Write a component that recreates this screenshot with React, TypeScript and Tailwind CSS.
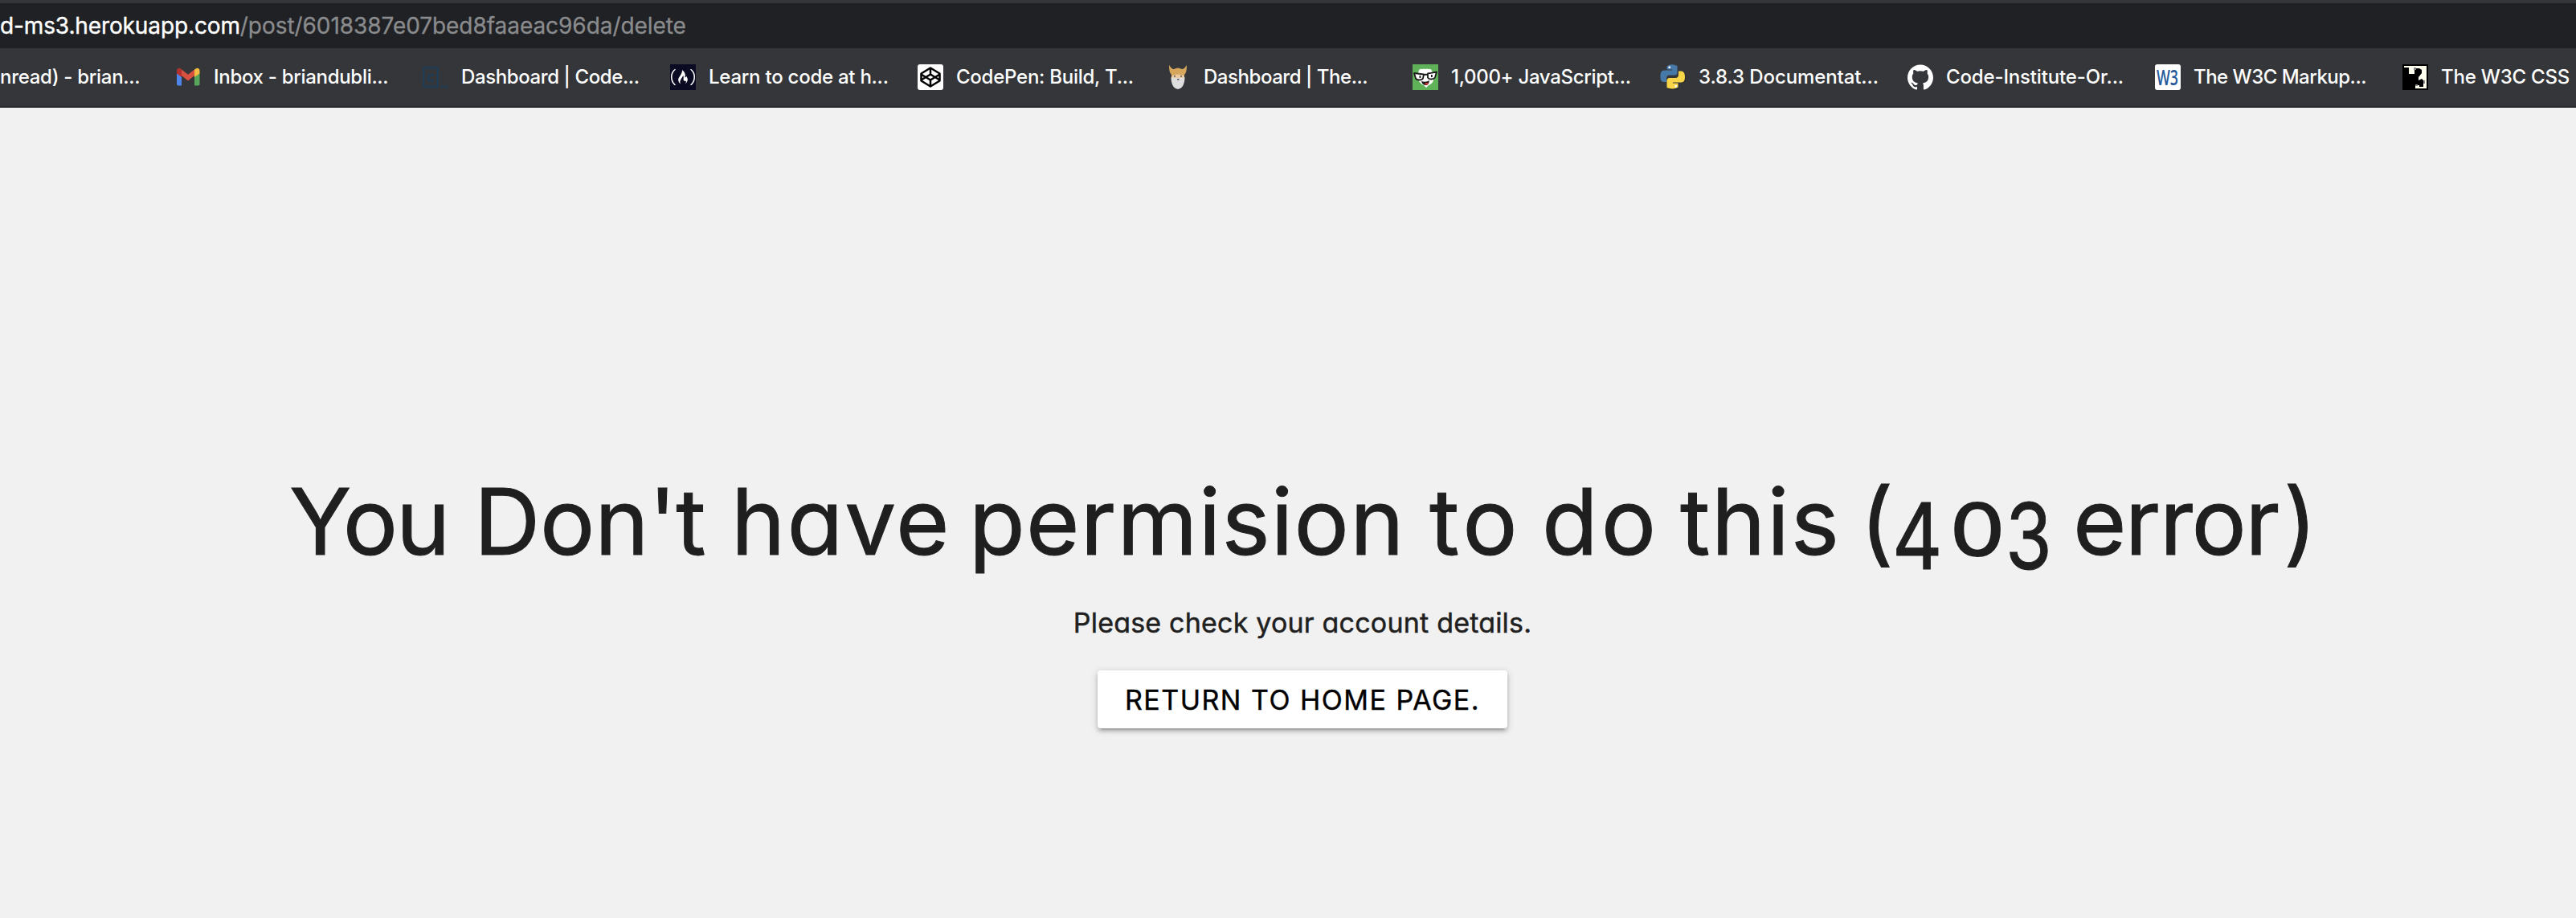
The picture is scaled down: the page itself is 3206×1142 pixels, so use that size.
import React from "react";
import { SiFreecodecamp, SiGithub } from "react-icons/si";

function Gmail() {
  return (
    <svg viewBox="0 0 32 32" className="h-8 w-8">
      <path fill="#4f86ec" d="M2 11v13.500q0 2 2 2H8V15z" />
      <path fill="#58a55c" d="M30.500 11v13.500q0 2-2 2H24V15z" />
      <path fill="#b3312c" d="M2 8c0-3 3-4 5-2.500l1 1V16l-6-4.500z" />
      <path fill="#f2bd42" d="M30.500 8c0-3-3-4-5-2.500l-1.500 1V16l6.500-4.500z" />
      <path fill="#d85140" d="M8 6.500l8 6.200 8-6.200V14l-8 6.500L8 14z" />
    </svg>
  );
}

function CodeInstitute() {
  return (
    <svg viewBox="0 0 32 32" className="h-8 w-8" fill="none" stroke="#223c53" strokeWidth="2.400">
      <path d="M1.200 4.200h17.600v23.600H1.200zM22.500 27.800h9" />
      <path strokeWidth="3" d="M13.500 14.500c-1.500-2-6.500-2-6.500 2.500s5 4.500 6.500 2.500" />
    </svg>
  );
}

function FreeCodeCamp() {
  return (
    <span className="flex h-8 w-8 items-center justify-center bg-[#0a0a23] text-white">
      <SiFreecodecamp className="h-[30px] w-[30px]" />
    </span>
  );
}

function CodePen() {
  return (
    <svg viewBox="0 0 32 32" className="h-8 w-8">
      <rect width="32" height="32" rx="3" fill="#fff" />
      <g fill="none" stroke="#000" strokeWidth="2.500" strokeLinejoin="round">
        <path d="M16 4.500L27.500 11.500v9L16 27.500 4.500 20.500v-9z" />
        <path d="M4.500 12.500L16 19.500l11.500-7M4.500 19.500L16 12.500l11.500 7M16 4.500v8M16 19.500v8" />
      </g>
    </svg>
  );
}

function Viking() {
  return (
    <svg viewBox="0 0 32 32" className="h-8 w-8">
      <path fill="#d5a65c" d="M5 1c2 3 4 5 6 5q5-3 10 0c2 0 4-2 6-5 0 7-1 10-3 12v4H8v-4C6 11 5 8 5 1z" />
      <path fill="#ecc9a0" d="M8 14q8-3 16 0v5H8z" />
      <path fill="#dedede" d="M7.500 16l3 1h11l3-1c0 7-2 14-8.500 15C9.500 30 7.500 23 7.500 16z" />
      <path fill="#555" d="M11 14h2v1.500h-2zM19 14h2v1.500h-2zM15 18h2.500v1.500H15z" />
    </svg>
  );
}

function NerdFace() {
  return (
    <svg viewBox="0 0 32 32" className="h-8 w-8">
      <path fill="#5fb257" d="M0 0h32v32H0z" />
      <path fill="#fff" d="M8 7q2-2 4-1 2-1 4 0 2-1 4 0 3-1 4 2l2 4v8c-1 3-3 5-6 6l-3 3-3-3c-3-1-6-4-7-7v-8z" />
      <path fill="#fff" stroke="#1b1b1b" strokeWidth="1.800" strokeLinejoin="round" d="M2 11l12 1.500-1 5q-1 2-4.500 2T4 17.500zM30 9.500l-11 2v5q1 2 4.500 2T28 16zM14 13l5-.5" />
      <path fill="#1b1b1b" d="M8.500 14h1.800v3H8.500zM23 13h1.800v3H23zM11 21q6 2 10-1-1 6-4 6-5 0-6-5z" />
      <path fill="#e0342b" d="M15 24q3-2 5 0-3 3-5 0z" />
    </svg>
  );
}

function Python() {
  return (
    <svg viewBox="0 0 32 32" className="h-8 w-8">
      <path fill="#27282b" d="M10 30h13v2H10zM30 12h2v10h-2z" opacity=".6" />
      <path fill="#4678a8" d="M8.500 2.500Q14-1.500 21.500 2v8q0 3.500-3.500 3.500h-6q-4 0-4 4V22H5Q0 22 0.500 15 0 8 5 7.500h10V6.500H8.500z" />
      <path fill="#f8d648" d="M23 8.500h4q4 .5 4 7.500 0 6.500-4.500 6.500H16v1h6.500v5Q16 32 8.500 29v-8.500q0-3.500 3.500-3.500h7q4 0 4-4.500z" />
      <path fill="#fff" d="M10.500 2.500h2.500V5h-2.500zM18.500 26H21v2.500h-2.500z" />
    </svg>
  );
}

function W3() {
  return (
    <svg viewBox="0 0 32 32" className="h-8 w-8 overflow-visible">
      <rect width="32" height="32" rx="3" fill="#fff" />
      <text x="2" y="26" textLength="27" lengthAdjust="spacingAndGlyphs" className="font-['Open_Sans',sans-serif] text-[27px] font-semibold" fill="#245a9c">W3</text>
    </svg>
  );
}

function W3Css() {
  return (
    <svg viewBox="0 0 32 32" className="h-8 w-8">
      <path d="M0 0h32v32H0z" />
      <path fill="#fffff0" d="M2 2h28v28H16v-4h5v2h5v-8l-2-2-4 2v-4l4-5V7l-3-2h-4v2h-2v5H8V4H2z" />
      <path fill="#888" d="M14 4h3v3h-3zM26 20h2v4h-2zM16 25h3v2h-3z" />
    </svg>
  );
}

const bookmarks = [
  { Icon: Gmail, label: "Inbox - briandubli...", tracking: "tracking-[-0.3px]" },
  { Icon: CodeInstitute, label: "Dashboard | Code...", tracking: "tracking-[-0.4px]" },
  { Icon: FreeCodeCamp, label: "Learn to code at h...", tracking: "tracking-[-0.25px]" },
  { Icon: CodePen, label: "CodePen: Build, T...", tracking: "tracking-[-0.25px]" },
  { Icon: Viking, label: "Dashboard | The...", tracking: "tracking-[-0.45px]" },
  { Icon: NerdFace, label: "1,000+ JavaScript...", tracking: "tracking-[-0.3px]" },
  { Icon: Python, label: "3.8.3 Documentat...", tracking: "tracking-[-0.1px]" },
  { Icon: SiGithub, label: "Code-Institute-Or...", tracking: "tracking-[-0.15px]" },
  { Icon: W3, label: "The W3C Markup...", tracking: "tracking-[-0.5px]" },
  { Icon: W3Css, label: "The W3C CSS", tracking: "tracking-[-0.2px]" },
];

export default function App() {
  return (
    <div className="h-[1142px] w-[3206px] overflow-hidden bg-[#f1f1f1] font-[Inter,sans-serif] whitespace-nowrap">
      <header className="h-[134px] border-b-2 border-[#28292c] bg-[#35363a] pt-1">
        <div className="flex h-14 items-center bg-[#202124] text-[28px] tracking-[-0.06px]">
          <span className="tracking-[-0.12px] text-white [-webkit-text-stroke:0.4px_white]">d-ms3.herokuapp.com</span>
          <span className="text-[#8a8b8d] [-webkit-text-stroke:0.3px_#8a8b8d]">/post/6018387e07bed8faaeac96da/delete</span>
        </div>
        <nav className="flex h-[72px] items-center text-[24px] font-medium text-white">
          <span className="w-[218px] shrink-0 tracking-[-0.3px]">nread) - brian...</span>
          {bookmarks.map(({ Icon, label, tracking }) => (
            <a key={label} className="flex w-[308px] shrink-0 items-center gap-4">
              <Icon className="h-8 w-8" />
              <span className={tracking}>{label}</span>
            </a>
          ))}
        </nav>
      </header>
      <main className="pt-[440px] text-[#1f1f1f] [font-feature-settings:'cv11']">
        <h1 className="flex h-[150px] pl-[360px] text-[114px] leading-[150px] [-webkit-text-stroke:1px_#1f1f1f]">
          <span className="w-[230px] tracking-[-2px]">You </span>
          <span className="w-[320px] tracking-[-0.2px]">Don't </span>
          <span className="w-[296px] tracking-[2px]">have </span>
          <span className="w-[573px] tracking-[1.2px]">permision </span>
          <span className="w-[140px] tracking-[5px]">to </span>
          <span className="w-[172px] tracking-[4px]">do </span>
          <span className="w-[224px] tracking-[1.8px]">this </span>
          <span className="flex w-[265px]">
            <span className="w-[40px]">(</span>
            <span className="w-[72px] origin-left translate-y-[18px] scale-x-[0.85]">4</span>
            <span className="w-[69px] origin-left scale-x-[1.2] pt-[10px] text-[90px] [-webkit-text-stroke:2px_#1f1f1f]">0</span>
            <span className="w-[58px] origin-left translate-y-[18px] scale-x-[0.82]">3</span>
          </span>
          <span className="w-[262px] tracking-[-1.6px]">error</span>
          <span>)</span>
        </h1>
        <div className="flex flex-col items-center pl-[36px]">
          <p className="mt-[26px] text-[34px] leading-[50px] tracking-[0.2px] [-webkit-text-stroke:0.5px_#1f1f1f]">Please check your account details.</p>
          <a className="mt-[34px] flex h-[72px] w-[510px] items-center justify-center rounded bg-white text-[34px] tracking-[1.5px] text-black shadow-[0_4px_4px_rgba(0,0,0,0.14),0_6px_2px_-4px_rgba(0,0,0,0.12),0_2px_10px_rgba(0,0,0,0.2)] [-webkit-text-stroke:0.4px_black]">
            RETURN TO HOME PAGE.
          </a>
        </div>
      </main>
    </div>
  );
}
